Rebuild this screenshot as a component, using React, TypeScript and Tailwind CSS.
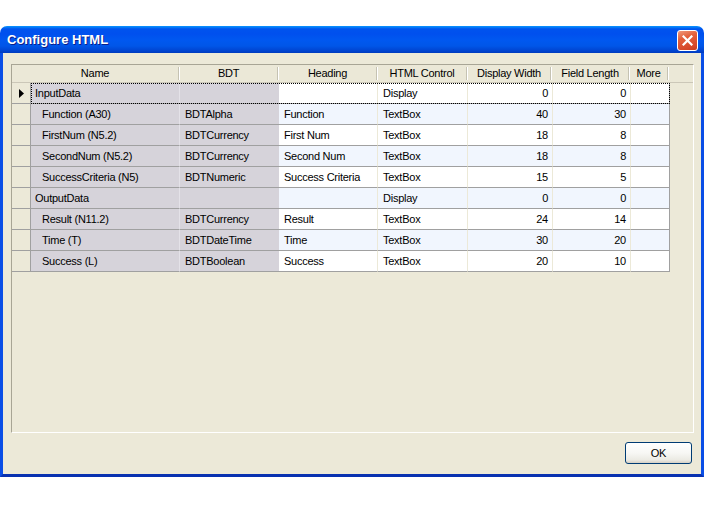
import React from 'react'

type Row = {
  name: string
  group?: boolean
  bdt: string
  heading: string
  ctrl: string
  dw: string
  fl: string
}

const rows: Row[] = [
  { name: 'InputData', group: true, bdt: '', heading: '', ctrl: 'Display', dw: '0', fl: '0' },
  { name: 'Function (A30)', bdt: 'BDTAlpha', heading: 'Function', ctrl: 'TextBox', dw: '40', fl: '30' },
  { name: 'FirstNum (N5.2)', bdt: 'BDTCurrency', heading: 'First Num', ctrl: 'TextBox', dw: '18', fl: '8' },
  { name: 'SecondNum (N5.2)', bdt: 'BDTCurrency', heading: 'Second Num', ctrl: 'TextBox', dw: '18', fl: '8' },
  { name: 'SuccessCriteria (N5)', bdt: 'BDTNumeric', heading: 'Success Criteria', ctrl: 'TextBox', dw: '15', fl: '5' },
  { name: 'OutputData', group: true, bdt: '', heading: '', ctrl: 'Display', dw: '0', fl: '0' },
  { name: 'Result (N11.2)', bdt: 'BDTCurrency', heading: 'Result', ctrl: 'TextBox', dw: '24', fl: '14' },
  { name: 'Time (T)', bdt: 'BDTDateTime', heading: 'Time', ctrl: 'TextBox', dw: '30', fl: '20' },
  { name: 'Success (L)', bdt: 'BDTBoolean', heading: 'Success', ctrl: 'TextBox', dw: '20', fl: '10' },
]

function HeaderCell({ label, width }: { label: string; width: string }) {
  return (
    <div className={`${width} flex items-center h-full`}>
      <span className="flex-1 text-center">{label}</span>
      <span className="h-[13px] w-[2px] border-l border-l-[#c5c2b2] border-r border-r-white" />
    </div>
  )
}

function CloseIcon() {
  return (
    <svg width="11" height="11" viewBox="0 0 11 11">
      <path d="M1.5 1.5 L9.5 9.5 M9.5 1.5 L1.5 9.5" stroke="white" strokeWidth="2.2" strokeLinecap="square" />
    </svg>
  )
}

export default function App() {
  return (
    <div className="min-h-screen bg-white pt-[26px] font-['Liberation_Sans',Arial,sans-serif] text-[11px] tracking-[-0.25px] text-black">
      <div className="w-[704px] h-[451px] flex flex-col rounded-t-[7px] overflow-hidden">
        {/* title bar */}
        <div className="h-[27px] flex items-center pl-[7px] pr-[6px] bg-[linear-gradient(180deg,#0997ff_0px,#0053ee_3px,#0050ee_8px,#0058f0_14px,#0056e8_20px,#0043cf_25px,#003bbd_27px)]">
          <span className="flex-1 font-bold text-[13px] tracking-normal text-white [text-shadow:1px_1px_0_#0a1e8a] pt-[1px]">Configure HTML</span>
          <div className="w-[21px] h-[21px] rounded-[3px] border border-white bg-[linear-gradient(160deg,#f09a7c_0%,#e3603b_35%,#d5472a_80%,#c63d1e_100%)] flex items-center justify-center mt-[1px]">
            <CloseIcon />
          </div>
        </div>

        {/* body */}
        <div className="flex-1 flex flex-col bg-[#ece9d8] border-x-[3px] border-b-[3px] border-x-[#0a4ee6] border-b-[#0831b0] pl-[8px] pr-[7px] pt-[11px]">
          <div className="h-[369px] border-l border-t border-l-[#a8a595] border-t-[#a8a595] border-r border-b border-r-white border-b-white bg-[#ece9d8] flex flex-col">
            {/* header */}
            <div className="h-[18px] flex border-b border-b-[#cbc7b8] bg-[#ebe8d7]">
              <HeaderCell label="Name" width="w-[168px]" />
              <HeaderCell label="BDT" width="w-[99px]" />
              <HeaderCell label="Heading" width="w-[99px]" />
              <HeaderCell label="HTML Control" width="w-[90px]" />
              <HeaderCell label="Display Width" width="w-[84px]" />
              <HeaderCell label="Field Length" width="w-[78px]" />
              <HeaderCell label="More" width="w-[39px]" />
            </div>

            {/* rows */}
            {rows.map((r, i) => {
              const bg = i % 2 === 1 ? 'bg-[#f1f6fe]' : 'bg-white'
              return (
                <div key={i} className="flex h-[21px]">
                  <div className="w-[19px] border-b border-r border-b-[#a0a0a0] border-r-[#a0a0a0] bg-[#ece9d8] flex items-center justify-center">
                    {i === 0 && (
                      <svg width="5" height="9" viewBox="0 0 5 9">
                        <path d="M0 0 L5 4.5 L0 9 Z" fill="black" />
                      </svg>
                    )}
                  </div>
                  <div className={`flex ${i === 0 ? 'outline-1 outline-dotted outline-black -outline-offset-1' : ''}`}>
                    <div className={`w-[149px] bg-[#d6d3da] border-b border-r border-b-[#a0a0a0] border-r-[#e4e2e8] flex items-center ${r.group ? 'pl-[4px]' : 'pl-[11px]'}`}>
                      {r.name}
                    </div>
                    <div className="w-[99px] bg-[#d6d3da] border-b border-b-[#a0a0a0] flex items-center pl-[5px]">
                      {r.bdt}
                    </div>
                    <div className={`w-[99px] ${bg} border-b border-r border-b-[#a0a0a0] border-r-[#ece9d8] flex items-center pl-[5px]`}>
                      {r.heading}
                    </div>
                    <div className={`w-[90px] ${bg} border-b border-r border-b-[#a0a0a0] border-r-[#ece9d8] flex items-center pl-[5px]`}>
                      {r.ctrl}
                    </div>
                    <div className={`w-[85px] ${bg} border-b border-r border-b-[#a0a0a0] border-r-[#ece9d8] flex items-center justify-end pr-[4px]`}>
                      {r.dw}
                    </div>
                    <div className={`w-[78px] ${bg} border-b border-r border-b-[#a0a0a0] border-r-[#ece9d8] flex items-center justify-end pr-[4px]`}>
                      {r.fl}
                    </div>
                    <div className={`w-[39px] ${bg} border-b border-r border-b-[#a0a0a0] border-r-[#a0a0a0]`} />
                  </div>
                </div>
              )
            })}
          </div>

          {/* buttons */}
          <div className="flex justify-end pt-[9px] pr-[2px]">
            <button className="w-[67px] h-[22px] rounded-[3px] border border-[#003c74] bg-[linear-gradient(180deg,#ffffff_0%,#f7f7f4_50%,#ebeae3_85%,#d6d0c5_100%)] text-[11px] flex items-center justify-center">
              OK
            </button>
          </div>
        </div>
      </div>
    </div>
  )
}
